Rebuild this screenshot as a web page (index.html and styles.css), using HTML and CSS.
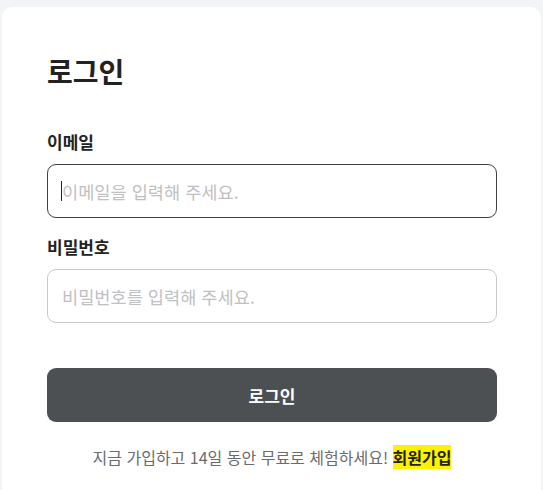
FILE: index.html
```html
<!DOCTYPE html>
<html lang="ko">
<head>
<meta charset="utf-8">
<link rel="stylesheet" href="styles.css">
</head>
<body>
<main class="card">
  <h1 class="title">로그인</h1>
  <form class="form">
    <div class="field">
      <label class="label">이메일</label>
      <div class="input-wrap">
        <input class="input input-active" type="text" placeholder="이메일을 입력해 주세요.">
        <span class="caret"></span>
      </div>
    </div>
    <div class="field">
      <label class="label">비밀번호</label>
      <div class="input-wrap">
        <input class="input" type="password" placeholder="비밀번호를 입력해 주세요.">
      </div>
    </div>
    <button class="submit" type="button">로그인</button>
  </form>
  <p class="signup">지금 가입하고 14일 동안 무료로 체험하세요! <a class="signup-link">회원가입</a></p>
</main>
</body>
</html>
```
FILE: styles.css
```css
html, body {
  margin: 0;
  padding: 0;
  background: #f3f4f7;
  font-family: "Noto Sans CJK KR", "Noto Sans", sans-serif;
  color: #222;
}
.card {
  box-sizing: border-box;
  margin: 7px 0 0 2px;
  width: 539px;
  min-height: 490px;
  background: #fff;
  border-radius: 10px;
  padding: 44px 44px 0 45px;
}
.title {
  margin: 0;
  font-size: 28px;
  font-weight: 700;
  line-height: 40px;
  color: #222;
}
.form {
  margin-top: 38px;
  display: flex;
  flex-direction: column;
}
.field {
  display: flex;
  flex-direction: column;
  margin-bottom: 16px;
}
.label {
  font-size: 17px;
  font-weight: 700;
  line-height: 26px;
  margin-bottom: 9px;
  color: #222;
}
.input-wrap {
  position: relative;
}
.input {
  box-sizing: border-box;
  width: 450px;
  height: 54px;
  border: 1px solid #c8c9cc;
  border-radius: 9px;
  padding: 0 14px;
  font-family: inherit;
  font-size: 17.6px;
  color: #222;
  outline: none;
  background: #fff;
}
.input::placeholder {
  color: #bfc0c3;
}
.input-active {
  border-color: #3d3f42;
}
.caret {
  position: absolute;
  left: 14px;
  top: 17px;
  width: 1px;
  height: 20px;
  background: #222;
}
.submit {
  margin-top: 29px;
  width: 450px;
  height: 54px;
  border: none;
  border-radius: 9px;
  background: #4d5053;
  color: #fff;
  font-family: inherit;
  font-size: 17px;
  font-weight: 700;
}
.signup {
  margin: 23px 0 0;
  width: 450px;
  text-align: center;
  font-size: 16px;
  line-height: 24px;
  color: #6a6b6e;
}
.signup-link {
  font-weight: 700;
  color: #222;
  background: #fff200;
}
```
